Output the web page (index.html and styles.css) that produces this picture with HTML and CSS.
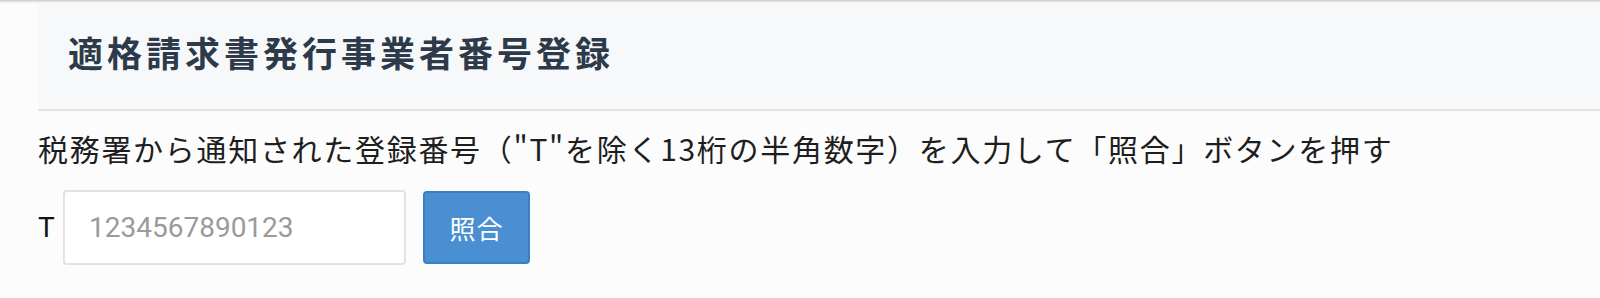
FILE: index.html
```html
<!DOCTYPE html>
<html lang="ja">
<head>
<meta charset="utf-8">
<link rel="stylesheet" href="styles.css">
</head>
<body>
<div class="shade"></div>
<div class="page">
  <div class="panel-head">
    <h1 class="title">適格請求書発行事業者番号登録</h1>
  </div>
  <p class="lead">税務署から通知された登録番号（"T"を除く13桁の半角数字）を入力して「照合」ボタンを押す</p>
  <div class="form-row">
    <span class="prefix">T</span>
    <input class="num-input" type="text" placeholder="1234567890123">
    <button class="btn" type="button">照合</button>
  </div>
</div>
</body>
</html>
```

FILE: styles.css
```css
html, body {
  margin: 0;
  padding: 0;
  background: #fcfcfc;
  height: 298px;
  overflow: hidden;
}
body {
  font-family: "Noto Sans CJK JP", "Noto Sans", sans-serif;
  color: #222;
}
.shade {
  height: 4px;
  background: linear-gradient(#c9c9c9, #f2f2f2 60%, #fcfcfc);
}
.page {
  padding-left: 38px;
}
.panel-head {
  background: #f7f8fa;
  height: 105px;
  border-bottom: 2px solid #e3e3e3;
  display: flex;
  align-items: center;
  padding-left: 30px;
}
.title {
  margin: 0;
  font-size: 35px;
  font-weight: 700;
  letter-spacing: 4px;
  color: #2c3a4a;
  line-height: 1;
  position: relative;
  top: -5px;
}
.lead {
  margin: 0;
  padding-top: 17px;
  font-size: 30px;
  line-height: 40px;
  letter-spacing: 1.7px;
  color: #1e1e1e;
}
.form-row {
  display: flex;
  align-items: center;
  margin-top: 22px;
}
.prefix {
  font-family: Roboto, "Noto Sans", sans-serif;
  font-size: 28px;
  color: #111;
  width: 25px;
}
.num-input {
  box-sizing: border-box;
  width: 343px;
  height: 75px;
  border: 2px solid #e2e2e2;
  border-radius: 4px;
  background: #fff;
  padding: 0 0 0 24px;
  font-family: Roboto, "Noto Sans", sans-serif;
  font-size: 28px;
  color: #333;
  outline: none;
}
.num-input::placeholder {
  color: #9a9a9a;
}
.btn {
  box-sizing: border-box;
  margin-left: 17px;
  width: 107px;
  height: 73px;
  background: #4a8fd1;
  border: 2px solid #3a7fc2;
  border-radius: 4px;
  color: #fff;
  font-family: "Noto Sans CJK JP", sans-serif;
  font-size: 26px;
  padding: 0;
  letter-spacing: 1px;
}
```
